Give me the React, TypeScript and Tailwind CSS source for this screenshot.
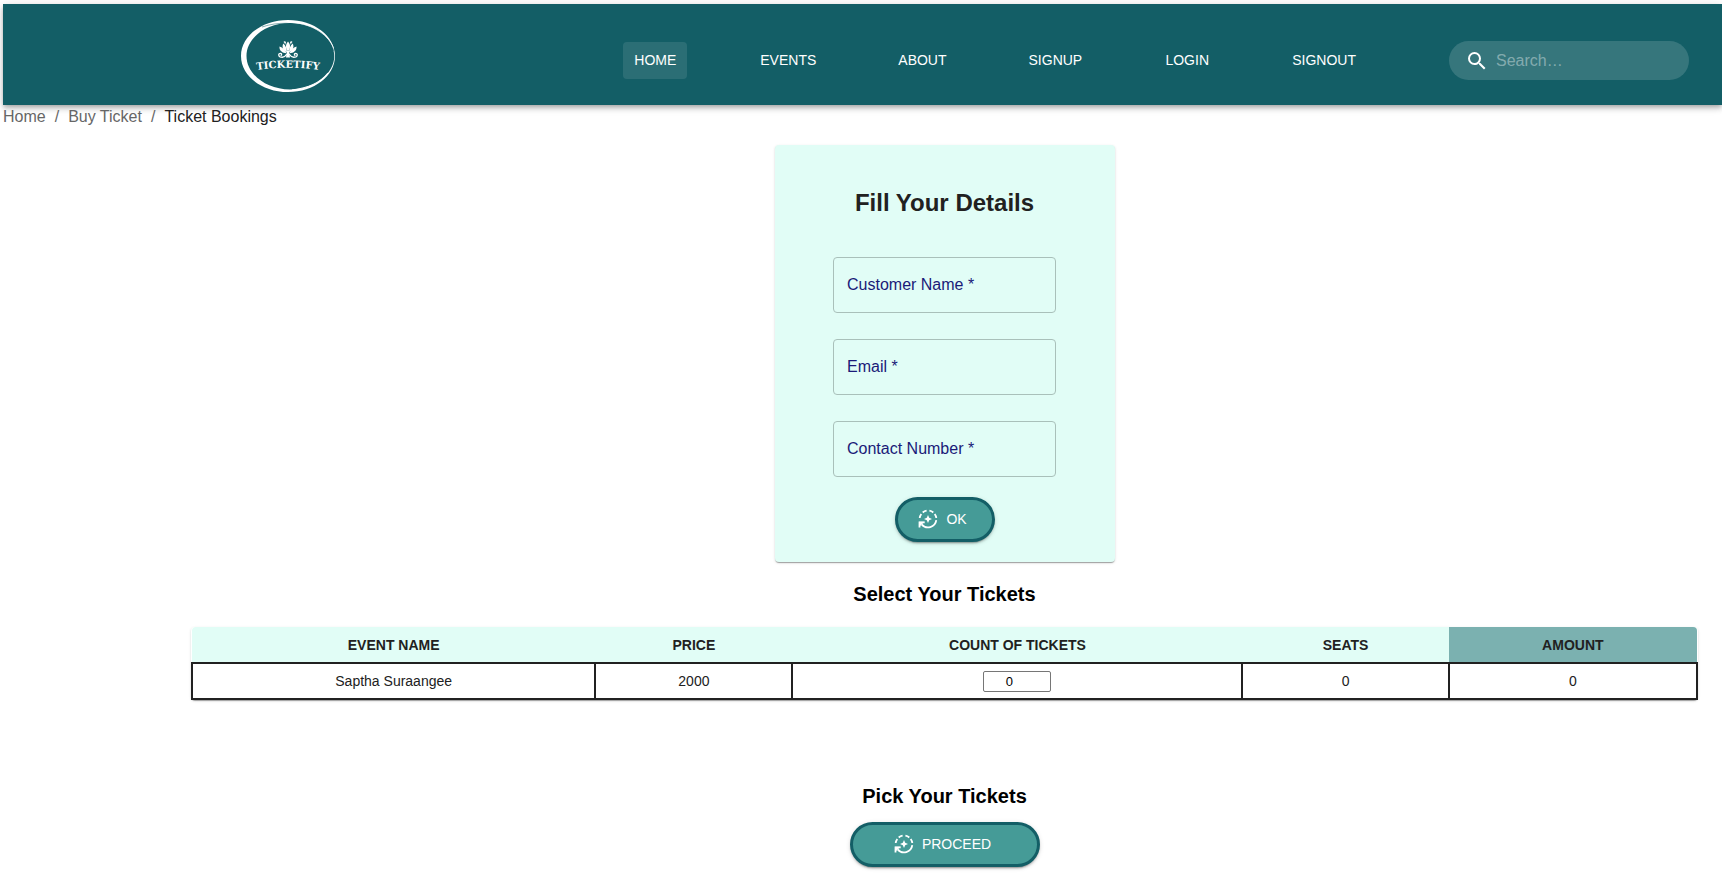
import { useState } from "react";
import { MdSearch } from "react-icons/md";

const navItems = ["Home", "Events", "About", "Signup", "Login", "Signout"];

const fields = [
  { id: "customer-name", label: "Customer Name", type: "text" },
  { id: "email", label: "Email", type: "email" },
  { id: "contact-number", label: "Contact Number", type: "tel" },
];

function Logo() {
  return (
    <svg viewBox="0 0 96 74" className="h-[74px] w-24" role="img" aria-label="Ticketify">
      <path
        fill="#fff"
        fillRule="evenodd"
        d="M48 1C74 1 95 17 95 37S74 73 48 73 1 57 1 37 22 1 48 1ZM50 4C26 4 6.500 19 6.500 37S26 70.500 50 70.500 94.300 55 94.300 37 75 4 50 4Z"
      />
      <path d="M22 8C54 -3 88 12 93.800 32" fill="none" stroke="#135e66" strokeWidth="0.500" />
      <path d="M52 3.500C74 5 89 17 93.500 29" fill="none" stroke="#fff" strokeWidth="0.700" />
      <path d="M52 71C68 69 81 63 88 54" fill="none" stroke="#fff" strokeWidth="1.100" />
      <g fill="#fff">
        <path d="M46 23.500c-.5-1.500-2-1.500-2.500-.5 1 .5 1.500 1.500 1.500 3M50 23.500c.5-1.500 2-1.500 2.500-.5-1 .5-1.500 1.500-1.500 3" />
        <path d="M48 22.500c-2.600 3-2.800 6.500 0 10 2.800-3.500 2.600-7 0-10Z" />
        <path d="M43.200 24.500c-1.700 4 .3 7.500 3.800 9-.2-3.500-1-7-3.800-9ZM52.800 24.500c1.700 4-.3 7.500-3.800 9 .2-3.500 1-7 3.800-9Z" />
        <path d="M39.500 27.500c-.5 4 3 6.700 7 6.700-1.500-3-3.500-5.700-7-6.700ZM56.500 27.500c.5 4-3 6.700-7 6.700 1.500-3 3.500-5.700 7-6.700Z" />
        <path d="M47 32h2l1 6.500h-4Z" />
      </g>
      <g fill="none" stroke="#fff" strokeWidth="1.300" strokeLinecap="round">
        <path d="M46.500 35.500c-1.500 2.500-4.500 3-6.500 2.300-2-1-1.500-3.500.3-3.500 1.500 0 1.700 1.500.7 2" />
        <path d="M49.500 35.500c1.500 2.500 4.500 3 6.500 2.300 2-1 1.500-3.500-.3-3.500-1.500 0-1.700 1.500-.7 2" />
      </g>
      <path id="logo-arc" d="M10 52Q48 45.500 86 52" fill="none" />
      <text fill="#fff" fontSize="10" fontWeight="700" fontFamily="'DejaVu Serif', serif" textAnchor="middle">
        <textPath href="#logo-arc" startOffset="50%">
          TICKETIFY
        </textPath>
      </text>
    </svg>
  );
}

function SparkCycleIcon() {
  return (
    <svg viewBox="0 0 20 20" className="size-5" aria-hidden="true">
      <g fill="none" stroke="#fff" strokeWidth="1.800">
        <path d="M18.300 11.200A8.400 8.400 0 0 1 3.600 15.400" />
        <path d="M1.700 9A8.400 8.400 0 0 1 3.300 5" />
        <path d="M4.700 3.500A8.400 8.400 0 0 1 8.600 1.700" />
        <path d="M11.400 1.700A8.400 8.400 0 0 1 15.300 3.500" />
        <path d="M16.700 5A8.400 8.400 0 0 1 18.300 9" />
        <path d="M1.500 18.500V13.300H6.700" />
      </g>
      <path fill="#fff" d="M1 12.800h5.600L1 18Z" />
      <path fill="#fff" d="M10 6l1.200 2.800L14 10l-2.800 1.200L10 14l-1.200-2.800L6 10l2.800-1.200Z" />
    </svg>
  );
}

function PillButton({ children, className }: { children: string; className: string }) {
  return (
    <button
      type="button"
      className={`flex h-[45px] items-center justify-center gap-2 rounded-full border-[3px] border-[#135e66] bg-[#459b97] pr-1 pb-0.5 text-sm text-white uppercase shadow-[0_3px_1px_-2px_rgba(0,0,0,0.2),0_2px_2px_0_rgba(0,0,0,0.14),0_1px_5px_0_rgba(0,0,0,0.12)] ${className}`}
    >
      <SparkCycleIcon />
      {children}
    </button>
  );
}

function Header() {
  return (
    <header className="flex h-[101px] items-center bg-[#135e66] pr-[33px] pl-[237px] text-white shadow-[0_2px_4px_-1px_rgba(0,0,0,0.2),0_4px_5px_0_rgba(0,0,0,0.14),0_1px_10px_0_rgba(0,0,0,0.12)]">
      <a href="#home" className="shrink-0 pt-0.5">
        <Logo />
      </a>
      <div className="ml-auto flex items-center gap-[84px] pt-3">
        <nav className="flex gap-16">
          {navItems.map((item, i) => (
            <a
              key={item}
              href={`#${item.toLowerCase()}`}
              className={`flex h-[37px] min-w-16 items-center justify-center rounded px-[9px] pb-0.5 text-sm uppercase ${i === 0 ? "bg-white/10" : ""}`}
            >
              {item}
            </a>
          ))}
        </nav>
        <label className="flex h-[39px] w-60 items-center gap-[7px] rounded-full bg-white/15 px-4">
          <MdSearch className="size-6 shrink-0" aria-hidden="true" />
          <input
            type="search"
            aria-label="Search"
            placeholder="Search…"
            className="w-full min-w-0 bg-transparent text-base outline-none placeholder:text-white/40"
          />
        </label>
      </div>
    </header>
  );
}

function DetailsForm() {
  return (
    <form className="flex h-[417px] w-[340px] flex-col items-center rounded bg-[#e1fdf6] pt-[42px] shadow-[0_2px_1px_-1px_rgba(0,0,0,0.2),0_1px_1px_0_rgba(0,0,0,0.14),0_1px_3px_0_rgba(0,0,0,0.12)]">
      <h1 className="text-2xl font-bold text-[#212121]">Fill Your Details</h1>
      <div className="mt-[38px] flex flex-col gap-[26px]">
        {fields.map((f) => (
          <div key={f.id} className="relative">
            <input
              id={f.id}
              type={f.type}
              required
              placeholder=" "
              className="peer block h-14 w-[223px] rounded border border-[#a9c0ba] bg-transparent px-[14px] text-base outline-none"
            />
            <label
              htmlFor={f.id}
              className="pointer-events-none absolute top-4 left-[14px] text-base text-[#1a1a78] peer-focus:hidden peer-[:not(:placeholder-shown)]:hidden"
            >
              {f.label} *
            </label>
          </div>
        ))}
      </div>
      <PillButton className="mt-5 w-[100px]">OK</PillButton>
    </form>
  );
}

function TicketTable() {
  const [count, setCount] = useState("0");
  const td = "h-9 border-2 border-[#212121] p-0";
  return (
    <div className="mt-[19px] w-full rounded shadow-[0_2px_1px_-1px_rgba(0,0,0,0.2),0_1px_1px_0_rgba(0,0,0,0.14),0_1px_3px_0_rgba(0,0,0,0.12)]">
      <table className="w-full table-fixed border-collapse text-center text-sm text-[#212121]">
        <colgroup>
          <col className="w-[26.8%]" />
          <col className="w-[13.1%]" />
          <col className="w-[29.9%]" />
          <col className="w-[13.7%]" />
          <col className="w-[16.5%]" />
        </colgroup>
        <thead>
          <tr className="h-9 bg-[#e1fdf6] uppercase">
            <th scope="col" className="rounded-tl">Event Name</th>
            <th scope="col">Price</th>
            <th scope="col">Count of Tickets</th>
            <th scope="col">Seats</th>
            <th scope="col" className="rounded-tr bg-[#7bb1b0]">Amount</th>
          </tr>
        </thead>
        <tbody>
          <tr>
            <td className={td}>Saptha Suraangee</td>
            <td className={td}>2000</td>
            <td className={td}>
              <input
                type="number"
                min="0"
                aria-label="Count of tickets"
                value={count}
                onChange={(e) => setCount(e.target.value)}
                className="mx-auto block h-[21px] w-[68px] rounded-xs border border-[#767676] bg-white pr-4 text-center text-[13px] text-black [appearance:textfield] [&::-webkit-inner-spin-button]:appearance-none"
              />
            </td>
            <td className={td}>0</td>
            <td className={td}>0</td>
          </tr>
        </tbody>
      </table>
    </div>
  );
}

export default function App() {
  return (
    <div className="min-h-screen bg-white pt-1 pl-[3px] font-['Liberation_Sans',Arial,sans-serif] text-black">
      <Header />
      <nav aria-label="Breadcrumb">
        <ol className="flex gap-[9px] text-base text-[#666666]">
          <li><a href="#home">Home</a></li>
          <li aria-hidden="true">/</li>
          <li><a href="#buy-ticket">Buy Ticket</a></li>
          <li aria-hidden="true">/</li>
          <li aria-current="page" className="text-[#212121]">Ticket Bookings</li>
        </ol>
      </nav>
      <main className="flex flex-col items-center pt-4 pr-6 pl-[188px]">
        <DetailsForm />
        <h2 className="mt-[18px] text-xl font-bold">Select Your Tickets</h2>
        <TicketTable />
        <h2 className="mt-[82px] text-xl font-bold">Pick Your Tickets</h2>
        <PillButton className="mt-3 w-[190px]">Proceed</PillButton>
      </main>
    </div>
  );
}
